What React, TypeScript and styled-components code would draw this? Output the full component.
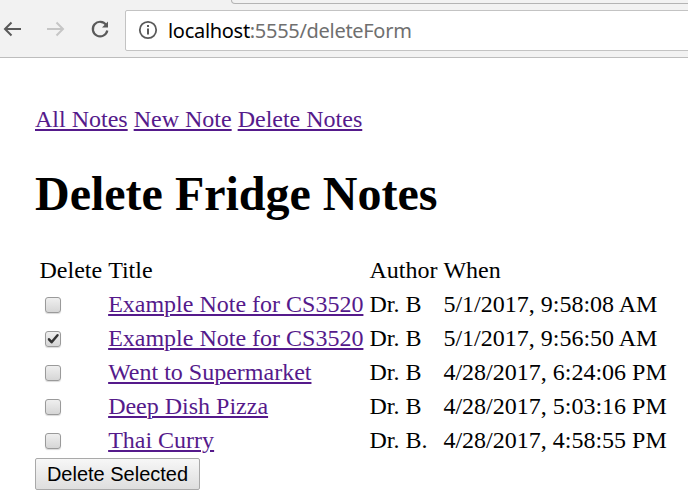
import React from "react";
import styled, { createGlobalStyle } from "styled-components";

const Global = createGlobalStyle`
  html, body { margin: 0; padding: 0; background: #fff; }
  body { font-family: "Liberation Serif", "Times New Roman", serif; }
`;

const Chrome = styled.div`
  height: 57px;
  background: #f2f2f2;
  border-bottom: 1px solid #bdbdbd;
  display: flex;
  align-items: center;
  position: relative;
  overflow: hidden;
`;

const TopEdge = styled.div`
  position: absolute;
  left: 231px;
  right: -10px;
  top: -10px;
  height: 13px;
  border: 1px solid #b4b4b4;
  border-top: none;
  border-radius: 0 0 0 4px;
  background: #f2f2f2;
`;

const NavButton = styled.div<{ $left: number }>`
  width: 24px;
  height: 24px;
  margin-left: ${(p) => p.$left}px;
  display: flex;
  align-items: center;
  justify-content: center;
  flex: none;
`;

const Omnibox = styled.div`
  margin-left: 13px;
  margin-top: 3px;
  height: 41px;
  flex: 1;
  margin-right: -20px;
  background: #fff;
  border: 1px solid #c3c3c3;
  border-radius: 2px;
  display: flex;
  align-items: center;
  box-sizing: border-box;
  padding-left: 12px;
`;

const UrlText = styled.span`
  margin-left: 10px;
  font-family: "Noto Sans", "Open Sans", sans-serif;
  font-size: 20px;
  letter-spacing: -0.3px;
  color: #000;
  white-space: nowrap;
`;

const UrlRest = styled.span`
  color: #6f6f6f;
`;

const Page = styled.div`
  padding: 48px 0 0 35px;
  font-size: 24px;
  color: #000;
`;

const Nav = styled.div`
  display: flex;
  gap: 6px;
  line-height: 27.6px;
`;

const Link = styled.a`
  color: #551a8b;
  text-decoration: underline;
  text-underline-offset: 2px;
  text-decoration-thickness: 2px;
  cursor: pointer;
`;

const Heading = styled.h1`
  font-size: 48px;
  font-weight: bold;
  margin: 32px 0 32px 0;
  line-height: 55px;
`;

const Table = styled.table`
  border-collapse: separate;
  border-spacing: 3px;
  margin-left: 0;
  font-size: 24px;
`;

const Th = styled.th`
  font-weight: normal;
  text-align: left;
  padding: 1.5px;
  line-height: 27.6px;
`;

const Td = styled.td`
  padding: 1.5px;
  line-height: 27.6px;
  height: 28px;
  white-space: nowrap;
`;

const Box = styled.span<{ $checked?: boolean }>`
  display: inline-block;
  vertical-align: middle;
  width: 14px;
  height: 14px;
  margin: 0 0 2px 5px;
  border: 1px solid #9a9a9a;
  border-radius: 3px;
  background: linear-gradient(#efefef, #d6d6d6);
  box-shadow: 0 1px 1px rgba(0, 0, 0, 0.15);
  position: relative;
`;

const Button = styled.button`
  font-family: "Liberation Sans", Arial, sans-serif;
  font-size: 20px;
  height: 32px;
  width: 165px;
  margin-top: -1px;
  padding: 0;
  color: #000;
  background: linear-gradient(#f7f7f7, #dedede);
  border: 1px solid #a9a9a9;
  border-radius: 2px;
`;

const Check = () => (
  <svg width="14" height="14" viewBox="0 0 14 14" style={{ position: "absolute", left: 0, top: 0 }}>
    <path d="M3 7.3 L5.6 10.2 L11.5 3.2" stroke="#333" strokeWidth="2.5" fill="none" strokeLinecap="round" strokeLinejoin="round" />
  </svg>
);

const notes = [
  { title: "Example Note for CS3520", author: "Dr. B", when: "5/1/2017, 9:58:08 AM", checked: false },
  { title: "Example Note for CS3520", author: "Dr. B", when: "5/1/2017, 9:56:50 AM", checked: true },
  { title: "Went to Supermarket", author: "Dr. B", when: "4/28/2017, 6:24:06 PM", checked: false },
  { title: "Deep Dish Pizza", author: "Dr. B", when: "4/28/2017, 5:03:16 PM", checked: false },
  { title: "Thai Curry", author: "Dr. B.", when: "4/28/2017, 4:58:55 PM", checked: false },
];

export default function App() {
  return (
    <>
      <Global />
      <Chrome>
        <TopEdge />
        <NavButton $left={0}>
          <svg width="22" height="22" viewBox="0 0 22 22">
            <path d="M20 11 H4 M10.5 4.5 L4 11 L10.5 17.5" stroke="#5a5a5a" strokeWidth="2" fill="none" />
          </svg>
        </NavButton>
        <NavButton $left={20}>
          <svg width="22" height="22" viewBox="0 0 22 22">
            <path d="M2 11 H18 M11.5 4.5 L18 11 L11.5 17.5" stroke="#c6c6c6" strokeWidth="2" fill="none" />
          </svg>
        </NavButton>
        <NavButton $left={20}>
          <svg width="22" height="22" viewBox="0 0 22 22">
            <path d="M17.2 7 A7.3 7.3 0 1 0 18.3 12.5" stroke="#5a5a5a" strokeWidth="2.2" fill="none" />
            <path d="M19 3.5 V9.5 H13 Z" fill="#5a5a5a" />
          </svg>
        </NavButton>
        <Omnibox>
          <svg width="20" height="20" viewBox="0 0 20 20">
            <circle cx="10" cy="10" r="8.2" stroke="#5a5a5a" strokeWidth="1.8" fill="none" />
            <rect x="9" y="8.5" width="2" height="6" fill="#5a5a5a" />
            <rect x="9" y="5" width="2" height="2" fill="#5a5a5a" />
          </svg>
          <UrlText>
            localhost<UrlRest>:5555/deleteForm</UrlRest>
          </UrlText>
        </Omnibox>
      </Chrome>
      <Page>
        <Nav>
          <Link>All Notes</Link>
          <Link>New Note</Link>
          <Link>Delete Notes</Link>
        </Nav>
        <Heading>Delete Fridge Notes</Heading>
        <form>
          <Table>
            <thead>
              <tr>
                <Th>Delete</Th>
                <Th>Title</Th>
                <Th>Author</Th>
                <Th>When</Th>
              </tr>
            </thead>
            <tbody>
              {notes.map((n, i) => (
                <tr key={i}>
                  <Td>
                    <Box $checked={n.checked}>{n.checked && <Check />}</Box>
                  </Td>
                  <Td>
                    <Link>{n.title}</Link>
                  </Td>
                  <Td>{n.author}</Td>
                  <Td>{n.when}</Td>
                </tr>
              ))}
            </tbody>
          </Table>
          <Button type="button">Delete Selected</Button>
        </form>
      </Page>
    </>
  );
}
